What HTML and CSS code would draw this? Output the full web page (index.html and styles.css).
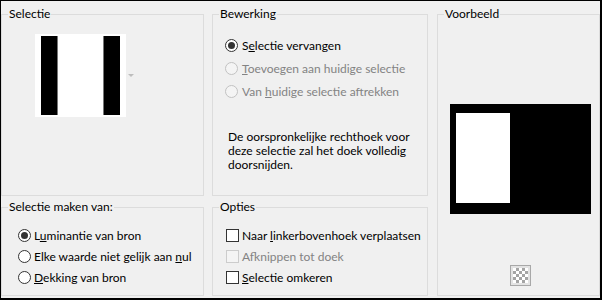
FILE: index.html
```html
<!DOCTYPE html>
<html lang="nl">
<head>
  <meta charset="UTF-8" />
  <title>Selectie uit masker</title>
  <link rel="stylesheet" href="styles.css">
</head>
<body>

  <div class="dialog">

    <!-- Selectie -->
    <section class="group sel">
      <div class="legend">Selectie</div>
      <div class="thumb-row">
        <svg class="thumb" width="91" height="83" viewBox="0 0 91 83">
          <rect width="91" height="83" fill="#fff"/>
          <rect x="6" y="2" width="16" height="79" fill="#000"/>
          <rect x="22" y="2" width="1" height="79" fill="#777"/>
          <rect x="68" y="2" width="1" height="79" fill="#777"/>
          <rect x="69" y="2" width="16" height="79" fill="#000"/>
        </svg>
        <svg class="drop-arrow" width="6" height="3" viewBox="0 0 6 3">
          <polygon points="0,0 6,0 3,3" fill="#bdbdbd"/>
        </svg>
      </div>
    </section>

    <!-- Bewerking -->
    <section class="group edit">
      <div class="legend">Bewerking</div>
      <div class="options">
        <label class="opt"><span class="radio checked"></span><span>S<u>e</u>lectie vervangen</span></label>
        <label class="opt disabled"><span class="radio"></span><span><u>T</u>oevoegen aan huidige selectie</span></label>
        <label class="opt disabled"><span class="radio"></span><span>Van <u>h</u>uidige selectie aftrekken</span></label>
      </div>
      <p class="note">De oorspronkelijke rechthoek voor<br>deze selectie zal het doek volledig<br>doorsnijden.</p>
    </section>

    <!-- Voorbeeld -->
    <section class="group preview">
      <div class="legend">Voorbeeld</div>
      <div class="canvas"><div class="canvas-sel"></div></div>
      <div class="checker"><div class="checker-grid"></div></div>
    </section>

    <!-- Selectie maken van -->
    <section class="group source">
      <div class="legend">Selectie maken van:</div>
      <div class="options small">
        <label class="opt"><span class="radio checked"></span><span>L<u>u</u>minantie van bron</span></label>
        <label class="opt"><span class="radio"></span><span>Elke waarde niet gelijk aan <u>n</u>ul</span></label>
        <label class="opt"><span class="radio"></span><span><u>D</u>ekking van bron</span></label>
      </div>
    </section>

    <!-- Opties -->
    <section class="group opts">
      <div class="legend">Opties</div>
      <div class="options small">
        <label class="opt"><span class="check"></span><span>Naar <u>l</u>inkerbovenhoek verplaatsen</span></label>
        <label class="opt disabled"><span class="check"></span><span>Af<u>k</u>nippen tot doek</span></label>
        <label class="opt"><span class="check"></span><span><u>S</u>electie omkeren</span></label>
      </div>
    </section>

  </div>

</body>
</html>
```

FILE: styles.css
```css
* {
  box-sizing: border-box;
  margin: 0;
  padding: 0;
}

body {
  background: #f0f0f0;
  font-family: 'Lato', 'Noto Sans', sans-serif;
  font-size: 12px;
  color: #000;
}

.dialog {
  width: 602px;
  height: 300px;
  border-style: solid;
  border-color: #000;
  border-width: 1px 2px 2px 1px;
  padding: 13px 0 2px 0;
  display: grid;
  grid-template-columns: 203px 216px 164px;
  grid-template-rows: 182px 89px;
  column-gap: 8px;
  row-gap: 11px;
}

.group {
  border: 1px solid #dcdcdc;
  display: flex;
  flex-direction: column;
}

.legend {
  width: fit-content;
  margin: -9px 0 0 6px;
  padding: 0 1px;
  line-height: 16px;
  background: #f0f0f0;
}

/* Selectie */
.sel {
  grid-column: 1;
  grid-row: 1;
}

.thumb-row {
  display: flex;
  align-items: center;
  margin: 12px 0 0 33px;
}

.thumb {
  display: block;
}

.drop-arrow {
  display: block;
  margin-left: 2px;
}

/* Bewerking */
.edit {
  grid-column: 2;
  grid-row: 1;
}

.options {
  margin-top: 12px;
  padding-left: 12px;
}

.opt {
  display: flex;
  align-items: center;
  gap: 4px;
  height: 23px;
}

.opt.disabled {
  color: #838383;
}

.radio {
  position: relative;
  flex: none;
  width: 13px;
  height: 13px;
  border: 1px solid #333;
  border-radius: 50%;
  background: #fff;
}

.radio.checked::after {
  content: "";
  position: absolute;
  left: 2px;
  top: 2px;
  width: 7px;
  height: 7px;
  border-radius: 50%;
  background: #333;
}

.disabled .radio {
  border-color: #c2c2c2;
  background: #f4f4f4;
}

.check {
  flex: none;
  width: 13px;
  height: 13px;
  border: 1px solid #333;
  background: #fff;
}

.disabled .check {
  border-color: #cccccc;
  background: #f4f4f4;
}

.note {
  margin: 27px 0 0 15px;
  line-height: 14px;
}

/* Voorbeeld */
.preview {
  grid-column: 3;
  grid-row: 1 / 3;
  margin-left: 1px;
}

.canvas {
  width: 141px;
  height: 110px;
  margin: 82px 0 0 12px;
  background: #000;
  padding: 9px 0 0 6px;
}

.canvas-sel {
  width: 54px;
  height: 90px;
  background: #fff;
}

.checker {
  width: 21px;
  height: 21px;
  margin: 51px 0 0 72px;
  border: 1px solid #a8a8a8;
  padding: 2px;
  background: #e3e3e3;
}

.checker-grid {
  width: 15px;
  height: 15px;
  background: repeating-conic-gradient(#a4a4a4 0 25%, #fff 0 50%) 0 0 / 6px 6px;
}

/* Selectie maken van / Opties */
.source {
  grid-column: 1;
  grid-row: 2;
}

.opts {
  grid-column: 2;
  grid-row: 2;
}

.options.small {
  margin-top: 10px;
}

.source .options {
  padding-left: 16px;
}

.opts .options {
  padding-left: 13px;
}

.options.small .opt {
  height: 21px;
  gap: 3px;
}
```
